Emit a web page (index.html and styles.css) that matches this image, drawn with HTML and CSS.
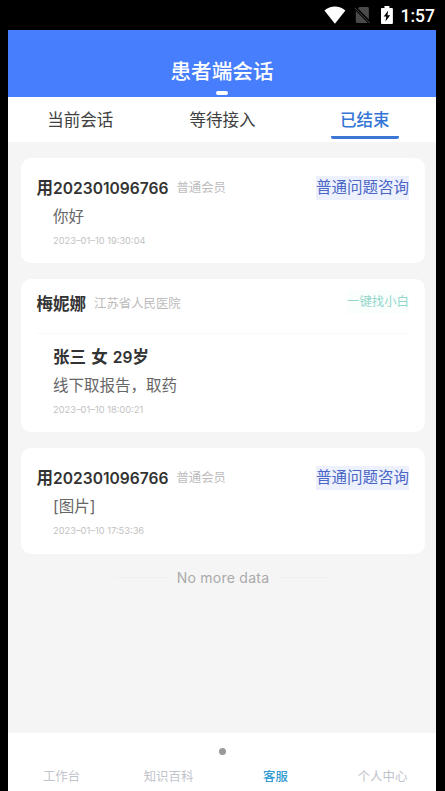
FILE: index.html
```html
<!DOCTYPE html>
<html lang="zh-CN">
<head>
<meta charset="utf-8">
<title>患者端会话</title>
<link rel="stylesheet" href="styles.css">
</head>
<body>
<div class="status">
  <svg class="wifi" width="22" height="18" viewBox="0 0 22 18"><path fill="#fff" d="M.4 4.400C6.500-.9 15.500-.9 21.600 4.400L11 17.800z"/></svg>
  <svg class="sim" width="17" height="18" viewBox="0 0 17 18"><path fill="#4a4a4a" d="M5.500 1h8Q15 1 15 2.500V13.500L4 2.500zM1.800 4.600L14 17H3.300Q1.800 17 1.800 15.500z"/><path stroke="#4a4a4a" stroke-width="1" d="M.8 1.800L16 17.200"/></svg>
  <svg class="battery" width="12" height="18" viewBox="0 0 12 18"><path fill="#fff" d="M3.500 0h5v2H11q1 0 1 1v14q0 1-1 1H1q-1 0-1-1V3q0-1 1-1h2.500z"/><path fill="#000" d="M7.300 4.500L2.700 10.500H5.300L4.500 15.500L9.300 9.200H6.500z"/></svg>
  <span class="clock">1:57</span>
</div>
<div class="app">
  <header class="header"><h1 class="title">患者端会话</h1><i class="mark"></i></header>
  <nav class="tabs">
    <a class="tab">当前会话</a>
    <a class="tab">等待接入</a>
    <a class="tab tab-active">已结束</a>
  </nav>
  <main class="list">
    <section class="card">
      <div class="head"><b class="name">用<span class="num">202301096766</span></b><span class="role">普通会员</span><span class="tag">普通问题咨询</span></div>
      <div class="message">你好</div>
      <div class="time">2023–01–10 19:30:04</div>
    </section>
    <section class="card card-referral">
      <div class="head"><b class="name">梅妮娜</b><span class="role">江苏省人民医院</span><span class="tag tag-quick">一键找小白</span></div>
      <div class="patient">张三 女 <span class="num">29</span>岁</div>
      <div class="message">线下取报告，取药</div>
      <div class="time">2023–01–10 18:00:21</div>
    </section>
    <section class="card">
      <div class="head"><b class="name">用<span class="num">202301096766</span></b><span class="role">普通会员</span><span class="tag">普通问题咨询</span></div>
      <div class="message">[图片]</div>
      <div class="time">2023–01–10 17:53:36</div>
    </section>
    <div class="end"><span class="end-text">No more data</span></div>
  </main>
  <footer class="bottom">
    <i class="dot"></i>
    <nav class="menu">
      <a class="item">工作台</a>
      <a class="item">知识百科</a>
      <a class="item item-active">客服</a>
      <a class="item">个人中心</a>
    </nav>
  </footer>
</div>
</body>
</html>
```
FILE: styles.css
```css
* { box-sizing: border-box; }
body {
  margin: 0;
  height: 791px;
  overflow: hidden;
  background: #000;
  font-family: Inter, "Noto Sans CJK SC", sans-serif;
}
.status {
  height: 30px;
  display: flex;
  align-items: flex-start;
  padding: 6px 10px 0 324px;
  color: #fff;
}
.sim { margin-left: 8px; }
.battery { margin-left: 10px; }
.clock {
  margin-left: 8px;
  font: 500 17.5px/20px Roboto, sans-serif;
  white-space: nowrap;
}
.app {
  width: 428px;
  height: 761px;
  margin-left: 8px;
  display: flex;
  flex-direction: column;
  background: #f5f5f5;
}
.header {
  height: 67px;
  padding-top: 27px;
  display: flex;
  flex-direction: column;
  align-items: center;
  background: #467efd;
}
.title {
  margin: 0;
  color: #fff;
  font-size: 20.6px;
  font-weight: 500;
  line-height: 30px;
}
.mark {
  width: 12px;
  height: 4px;
  margin-top: 4px;
  border-radius: 2px;
  background: #fff;
}
.tabs {
  height: 45px;
  display: grid;
  grid-template-columns: repeat(3, 1fr);
  justify-items: center;
  padding-left: 1px;
  background: #fff;
}
.tab {
  color: #404040;
  font-size: 16.5px;
  line-height: 47px;
  height: 42px;
}
.tab-active {
  width: 68px;
  color: #3475d5;
  font-weight: 500;
  text-align: center;
  border-bottom: 3px solid #3d77d6;
  border-radius: 2px;
}
.list {
  flex: 1;
  padding: 16px 11px 0 13px;
}
.card {
  height: 105px;
  margin-bottom: 16px;
  padding: 16px 16px 0 15.5px;
  border-radius: 10px;
  background: #fff;
}
.card-referral + .card { height: 106px; }
.head {
  display: flex;
  align-items: center;
  height: 28px;
}
.name {
  color: #333;
  font-size: 16.5px;
  font-weight: 600;
  line-height: 28px;
  white-space: nowrap;
}
.num { font-size: 15.6px; }
.role {
  margin-left: 8px;
  color: #bcbcbc;
  font-size: 12.4px;
  line-height: 24px;
}
.tag {
  height: 24px;
  margin-left: auto;
  color: #4a67c5;
  background: #edf1fe;
  font-size: 15.5px;
  line-height: 24px;
}
.message {
  padding: 1px 0 0 16.5px;
  color: #666;
  font-size: 15.5px;
  line-height: 28px;
}
.time {
  padding-left: 16.5px;
  color: #c2c2c2;
  font-size: 9.3px;
  line-height: 20px;
}
.card-referral {
  height: 153px;
  padding-top: 0;
}
.card-referral .head {
  height: 55px;
  padding-bottom: 4px;
  border-bottom: 1px solid #f8f8f8;
}
.card-referral .message { padding-top: 0; }
.tag-quick {
  color: #94d7ca;
  background: #fafffe;
  font-size: 12.4px;
  margin-bottom: 4px;
}
.patient {
  padding: 9px 0 0 16.5px;
  color: #333;
  font-size: 16.5px;
  font-weight: 600;
  line-height: 28px;
  word-spacing: 1px;
}
.end {
  display: flex;
  align-items: center;
  justify-content: center;
  gap: 8px;
  height: 14px;
  color: #aaa;
  font-size: 14px;
  letter-spacing: 0.25px;
}
.end::before, .end::after {
  content: "";
  width: 54px;
  height: 1px;
  background: #f0f0f0;
}
.bottom {
  height: 58px;
  padding-top: 15px;
  background: #fff;
}
.dot {
  display: block;
  width: 7px;
  height: 7px;
  margin: 0 auto;
  border-radius: 50%;
  background: #999;
}
.menu {
  display: grid;
  grid-template-columns: repeat(4, 1fr);
  text-align: center;
  margin-top: 11px;
}
.item {
  color: #bfc4cb;
  font-size: 12.4px;
  line-height: 22px;
}
.item-active {
  color: #339bd2;
  font-weight: 500;
}
```
